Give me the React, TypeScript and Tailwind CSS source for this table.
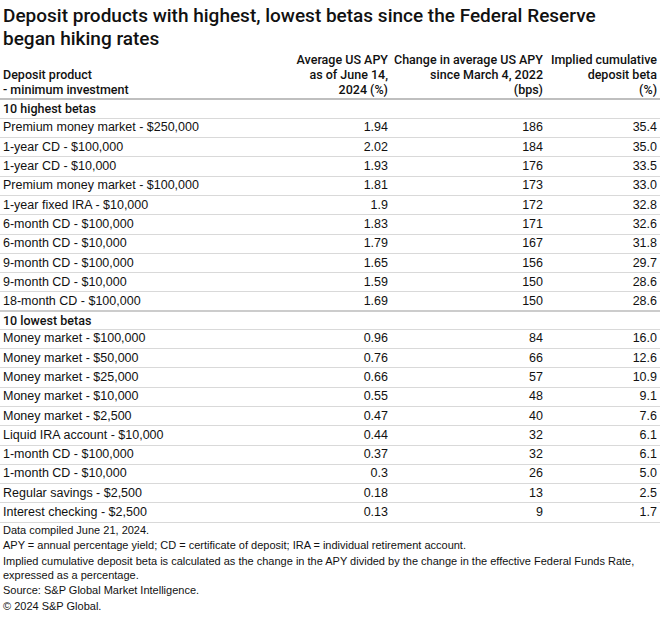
import React from "react";

type Row = [string, string, string, string];

const highest: Row[] = [
  ["Premium money market - $250,000", "1.94", "186", "35.4"],
  ["1-year CD - $100,000", "2.02", "184", "35.0"],
  ["1-year CD - $10,000", "1.93", "176", "33.5"],
  ["Premium money market - $100,000", "1.81", "173", "33.0"],
  ["1-year fixed IRA - $10,000", "1.9", "172", "32.8"],
  ["6-month CD - $100,000", "1.83", "171", "32.6"],
  ["6-month CD - $10,000", "1.79", "167", "31.8"],
  ["9-month CD - $100,000", "1.65", "156", "29.7"],
  ["9-month CD - $10,000", "1.59", "150", "28.6"],
  ["18-month CD - $100,000", "1.69", "150", "28.6"],
];

const lowest: Row[] = [
  ["Money market - $100,000", "0.96", "84", "16.0"],
  ["Money market - $50,000", "0.76", "66", "12.6"],
  ["Money market - $25,000", "0.66", "57", "10.9"],
  ["Money market - $10,000", "0.55", "48", "9.1"],
  ["Money market - $2,500", "0.47", "40", "7.6"],
  ["Liquid IRA account - $10,000", "0.44", "32", "6.1"],
  ["1-month CD - $100,000", "0.37", "32", "6.1"],
  ["1-month CD - $10,000", "0.3", "26", "5.0"],
  ["Regular savings - $2,500", "0.18", "13", "2.5"],
  ["Interest checking - $2,500", "0.13", "9", "1.7"],
];

const SectionRow = ({ label, thick }: { label: string; thick?: boolean }) => (
  <tr className={`border-b border-[#d9d9d9] ${thick ? "border-t-2 border-t-[#cccccc]" : ""}`}>
    <td
      className={`px-[3px] font-['Roboto',sans-serif] font-medium ${thick ? "h-[18px]" : "h-[19.3px]"}`}
      colSpan={4}
    >
      {label}
    </td>
  </tr>
);

const DataRow = ({ row }: { row: Row }) => (
  <tr className="border-b border-[#d9d9d9]">
    <td className="px-[3px] h-[19.3px]">{row[0]}</td>
    <td className="px-[3px] text-right">{row[1]}</td>
    <td className="px-[3px] text-right">{row[2]}</td>
    <td className="px-[3px] text-right">{row[3]}</td>
  </tr>
);

export default function App() {
  return (
    <div className="w-[660px] h-[620px] bg-white text-[#111] font-['Liberation_Sans',Arial,sans-serif]">
      <h1 className="px-[3px] pt-[4px] text-[19px] leading-[23px] font-medium font-['Roboto',sans-serif]">
        Deposit products with highest, lowest betas since the Federal Reserve
        <br />
        began hiking rates
      </h1>
      <table className="w-full mt-[2px] border-collapse text-[12.5px] leading-[15px]">
        <thead className="font-['Roboto',sans-serif]">
          <tr className="border-b-2 border-[#bfbfbf] align-bottom">
            <th className="px-[3px] pb-[1px] text-left font-medium w-[293px] whitespace-nowrap">
              Deposit product
              <br />- minimum investment
            </th>
            <th className="px-[3px] pb-[1px] text-right font-medium w-[98px] whitespace-nowrap">
              Average US APY
              <br />
              as of June 14,
              <br />
              2024 (%)
            </th>
            <th className="px-[3px] pb-[1px] text-right font-medium w-[154px] whitespace-nowrap">
              Change in average US APY
              <br />
              since March 4, 2022
              <br />
              (bps)
            </th>
            <th className="px-[3px] pb-[1px] text-right font-medium whitespace-nowrap">
              Implied cumulative
              <br />
              deposit beta
              <br />
              (%)
            </th>
          </tr>
        </thead>
        <tbody>
          <SectionRow label="10 highest betas" />
          {highest.map((r, i) => (
            <DataRow key={i} row={r} />
          ))}
          <SectionRow label="10 lowest betas" thick />
          {lowest.map((r, i) => (
            <DataRow key={i} row={r} />
          ))}
        </tbody>
      </table>
      <div className="px-[3px] text-[11px] leading-[14px] flex flex-col gap-[1.5px]">
        <p>Data compiled June 21, 2024.</p>
        <p>APY = annual percentage yield; CD = certificate of deposit; IRA = individual retirement account.</p>
        <p>
          Implied cumulative deposit beta is calculated as the change in the APY divided by the change in the effective Federal Funds Rate,
          <br />
          expressed as a percentage.
        </p>
        <p>Source: S&amp;P Global Market Intelligence.</p>
        <p>© 2024 S&amp;P Global.</p>
      </div>
    </div>
  );
}
